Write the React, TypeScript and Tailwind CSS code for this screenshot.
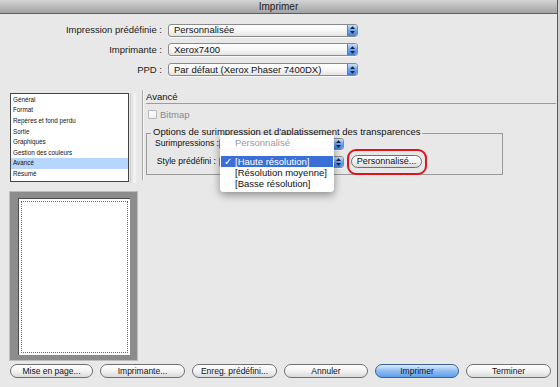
import React from 'react';

const font = { fontFamily: '"Liberation Sans", Arial, sans-serif' };

function Arrows() {
  return (
    <div className="w-[10px] h-full rounded-r-[3px] border-l border-[#5a7fb5] bg-gradient-to-b from-[#c9e0fb] via-[#6fa6ee] to-[#3f7fdc] flex items-center justify-center">
      <svg width="7" height="10" viewBox="0 0 7 10">
        <polygon points="1,4 3.5,1.3 6,4" fill="#10203a" />
        <polygon points="1,6 3.5,8.7 6,6" fill="#10203a" />
      </svg>
    </div>
  );
}

function Popup({ text, width, height = 13 }: { text: string; width: number; height?: number }) {
  return (
    <div
      className="flex items-stretch rounded-[3px] border border-[#8a8a8a] bg-gradient-to-b from-white via-[#f7f7f7] to-[#e4e4e4] shadow-[0_1px_0_rgba(255,255,255,0.7)]"
      style={{ width, height }}
    >
      <span className="flex-1 px-[5px] text-[9.5px] leading-none flex items-center text-[#111] whitespace-nowrap overflow-hidden">
        {text}
      </span>
      <Arrows />
    </div>
  );
}

function Button({ label, width, primary }: { label: string; width: number; primary?: boolean }) {
  return (
    <div
      className={
        primary
          ? 'h-[14px] rounded-full border border-[#3d628f] bg-gradient-to-b from-[#dcecfc] via-[#8ebdf1] to-[#5f9fe9] flex items-center justify-center text-[8.5px] text-[#111]'
          : 'h-[14px] rounded-full border border-[#707070] bg-gradient-to-b from-white via-[#f3f3f3] to-[#dadada] flex items-center justify-center text-[8.5px] text-[#111]'
      }
      style={{ width }}
    >
      {label}
    </div>
  );
}

const listItems = [
  'Général',
  'Format',
  'Repères et fond perdu',
  'Sortie',
  'Graphiques',
  'Gestion des couleurs',
  'Avancé',
  'Résumé',
];

export default function App() {
  return (
    <div className="w-[560px] h-[387px] bg-[#cfcfcf] overflow-hidden" style={font}>
      <div className="relative w-[558px] h-[387px] bg-[#e8e8e8] border-r border-[#555]">
        {/* title bar */}
        <div className="h-[14px] bg-gradient-to-b from-[#d4d4d4] to-[#a3a3a3] border-b border-[#5e5e5e] flex items-center justify-center text-[10px] text-[#222] leading-none">
          Imprimer
        </div>

        {/* top popups */}
        <div className="mt-[9px] grid grid-cols-[162px_190px] gap-x-[6px] gap-y-[5.5px] items-center">
          <span className="text-right text-[9.5px] text-[#1a1a1a] whitespace-nowrap">Impression prédéfinie :</span>
          <Popup text="Personnalisée" width={190} />
          <span className="text-right text-[9.5px] text-[#1a1a1a]">Imprimante :</span>
          <Popup text="Xerox7400" width={190} />
          <span className="text-right text-[9.5px] text-[#1a1a1a]">PPD :</span>
          <Popup text="Par défaut (Xerox Phaser 7400DX)" width={190} />
        </div>

        {/* middle */}
        <div className="mt-[13px] flex">
          <div className="w-[139px] pl-[9px] pt-[3px] flex flex-col">
            <div className="flex pl-[1px]">
              <div className="w-[119px] h-[89px] bg-white border border-[#444] flex flex-col pt-[1px]">
                {listItems.map(item => (
                  <div
                    key={item}
                    className={
                      item === 'Avancé'
                        ? 'h-[10.6px] px-[2px] text-[6.3px] leading-[10.6px] bg-[#b6d6fd] text-[#111]'
                        : 'h-[10.6px] px-[2px] text-[6.3px] leading-[10.6px] text-[#111]'
                    }
                  >
                    {item}
                  </div>
                ))}
              </div>
              <div className="ml-[1px] w-[8px] h-[90px] bg-gradient-to-r from-[#e0e0e0] via-[#f4f4f4] to-[#e6e6e6] border-l border-[#cfcfcf]" />
            </div>
            <div className="mt-[8px] w-[129px] h-[170px] border border-[#bdbdbd] bg-[#8c8c8c] pl-[8px] pr-[7px] pt-[6px] pb-[5px]">
              <div className="w-full h-full bg-white border-t border-l border-[#4e4e4e] p-[2px]">
                <div className="w-full h-full border border-dotted border-[#6a6a6a]" />
              </div>
            </div>
          </div>

          <div className="ml-[3px] w-px h-[90px] bg-[#a8a8a8] shadow-[1px_0_0_#f6f6f6]" />

          <div className="ml-[3px] w-[410px]">
            <div className="h-[14px] border-b border-[#9c9c9c] text-[9.5px] text-[#111] flex items-end pb-[1px] leading-none">
              Avancé
            </div>
            <div className="mt-[6px] flex items-center gap-[3px] pl-[2px]">
              <div className="w-[9px] h-[9px] rounded-[1px] border border-[#b9b9b9] bg-gradient-to-b from-white to-[#efefef]" />
              <span className="text-[9.5px] text-[#8a8a8a] leading-none">Bitmap</span>
            </div>
            <div className="relative mt-[14px] w-[357px] h-[42px] border border-[#9a9a9a] pl-[8px] pt-[3px]">
              <span className="absolute left-[4px] top-[-8px] px-[2px] bg-[#e8e8e8] text-[9.5px] leading-[11px] text-[#111] whitespace-nowrap">
                Options de surimpression et d'aplatissement des transparences
              </span>
              <div className="grid grid-cols-[61px_125px_auto] gap-x-[3px] gap-y-[5px] items-center">
                <span className="text-right text-[8.6px] text-[#111] whitespace-nowrap">Surimpressions :</span>
                <Popup text="" width={125} height={12} />
                <span />
                <span className="text-right text-[8.6px] text-[#111] whitespace-nowrap">Style prédéfini :</span>
                <Popup text="" width={125} height={12} />
                <div className="ml-[4px] w-[71px] h-[13px] rounded-full border border-[#707070] bg-gradient-to-b from-white via-[#f3f3f3] to-[#dadada] flex items-center justify-center text-[9px] text-[#111] leading-none">
                  Personnalisé...
                </div>
              </div>
            </div>
          </div>
        </div>

        {/* bottom buttons */}
        <div className="absolute left-[10px] top-[364px] flex gap-[7px]">
          <Button label="Mise en page..." width={83} />
          <Button label="Imprimante..." width={85} />
          <Button label="Enreg. prédéfini..." width={85} />
          <Button label="Annuler" width={84} />
          <Button label="Imprimer" width={84} primary />
          <Button label="Terminer" width={85} />
        </div>

        {/* open popup menu */}
        <div className="absolute left-[220px] top-[135px] w-[114px] bg-white/95 rounded-b-[4px] shadow-[0_3px_8px_rgba(0,0,0,0.4)] pt-[2px] pb-[3px] text-[9.5px] leading-[11px]">
          <div className="h-[11px] pl-[15px] text-[#9a9a9a]">Personnalisé</div>
          <div className="h-[8px]" />
          <div className="h-[11px] mx-[1px] bg-[#3a6fd8] text-white flex">
            <span className="w-[14px] text-center">✓</span>
            <span>[Haute résolution]</span>
          </div>
          <div className="h-[11px] pl-[15px] text-[#111]">[Résolution moyenne]</div>
          <div className="h-[11px] pl-[15px] text-[#111]">[Basse résolution]</div>
        </div>

        {/* red highlight */}
        <div className="absolute left-[347px] top-[149px] w-[80px] h-[26px] rounded-[9px] border-2 border-[#e0141c]" />
      </div>
    </div>
  );
}
